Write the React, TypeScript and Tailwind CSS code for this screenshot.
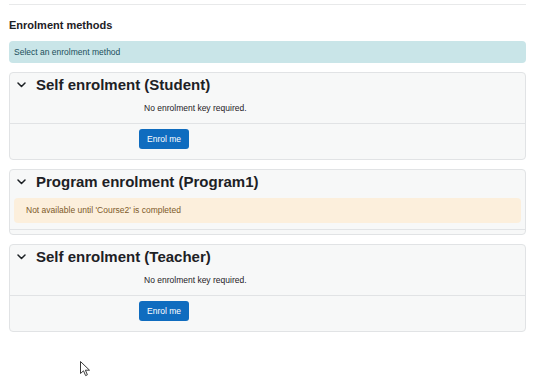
import React from "react";

const Chevron = () => (
  <svg width="9" height="6" viewBox="0 0 9 6" className="shrink-0">
    <polyline points="1,1 4.5,4.5 8,1" fill="none" stroke="#1d2125" strokeWidth="1.5" strokeLinecap="round" strokeLinejoin="round" />
  </svg>
);

const Header = ({ title }: { title: string }) => (
  <div className="flex items-center h-[21px] pt-[3px] pl-[7px]">
    <Chevron />
    <h3 className="ml-[10px] text-[15px] leading-[18px] font-bold text-[#1d2125]">{title}</h3>
  </div>
);

const SelfCard = ({ title }: { title: string }) => (
  <div className="rounded-[4px] border border-[#e1e3e5] bg-[#f7f8f8]">
    <Header title={title} />
    <div className="pt-[8px] pb-[9px] pl-[134px] text-[8.5px] leading-[12px] text-[#1d2125]">
      No enrolment key required.
    </div>
    <div className="flex border-t border-[#e1e3e5] pt-[5px] pb-[10px] pl-[129px]">
      <button className="h-[20px] w-[50px] rounded-[3px] bg-[#0f6cbf] text-[8.5px] leading-[20px] text-white text-center">
        Enrol me
      </button>
    </div>
  </div>
);

export default function App() {
  return (
    <div
      className="relative w-[540px] h-[386px] bg-white overflow-hidden pt-[4px] px-[9px]"
      style={{ fontFamily: '"Liberation Sans", Arial, sans-serif' }}
    >
      <div className="w-[517px]">
        <div className="h-px bg-[#e8e9ea]" />
        <h2 className="mt-[13px] text-[11px] leading-[14px] font-bold text-[#1d2125]">Enrolment methods</h2>
        <div className="mt-[9px] h-[22px] rounded-[4px] bg-[#c9e5e8] pl-[5px] flex items-center text-[8.5px] text-[#1b4f5b]">
          Select an enrolment method
        </div>
        <div className="mt-[9px]">
          <SelfCard title="Self enrolment (Student)" />
        </div>
        <div className="mt-[9px] rounded-[4px] border border-[#e1e3e5] bg-[#f7f8f8]">
          <Header title="Program enrolment (Program1)" />
          <div className="pt-[7px] pb-[6px] pl-[4px] pr-[4px]">
            <div className="h-[25px] rounded-[4px] bg-[#fcefdc] pl-[12px] flex items-center text-[8.5px] text-[#7d5a29]">
              Not available until 'Course2' is completed
            </div>
          </div>
          <div className="border-t border-[#e1e3e5] h-[5px]" />
        </div>
        <div className="mt-[9px]">
          <SelfCard title="Self enrolment (Teacher)" />
        </div>
      </div>
      <svg className="absolute left-[80px] top-[361px]" width="11" height="16" viewBox="0 0 11 16">
        <path d="M0.5,0.5 L0.5,12.5 L3.5,9.8 L5.6,14.6 L7.4,13.8 L5.4,9.2 L9.5,9.2 Z" fill="#ffffff" stroke="#3a3a3a" strokeWidth="1" strokeLinejoin="round" />
      </svg>
    </div>
  );
}
